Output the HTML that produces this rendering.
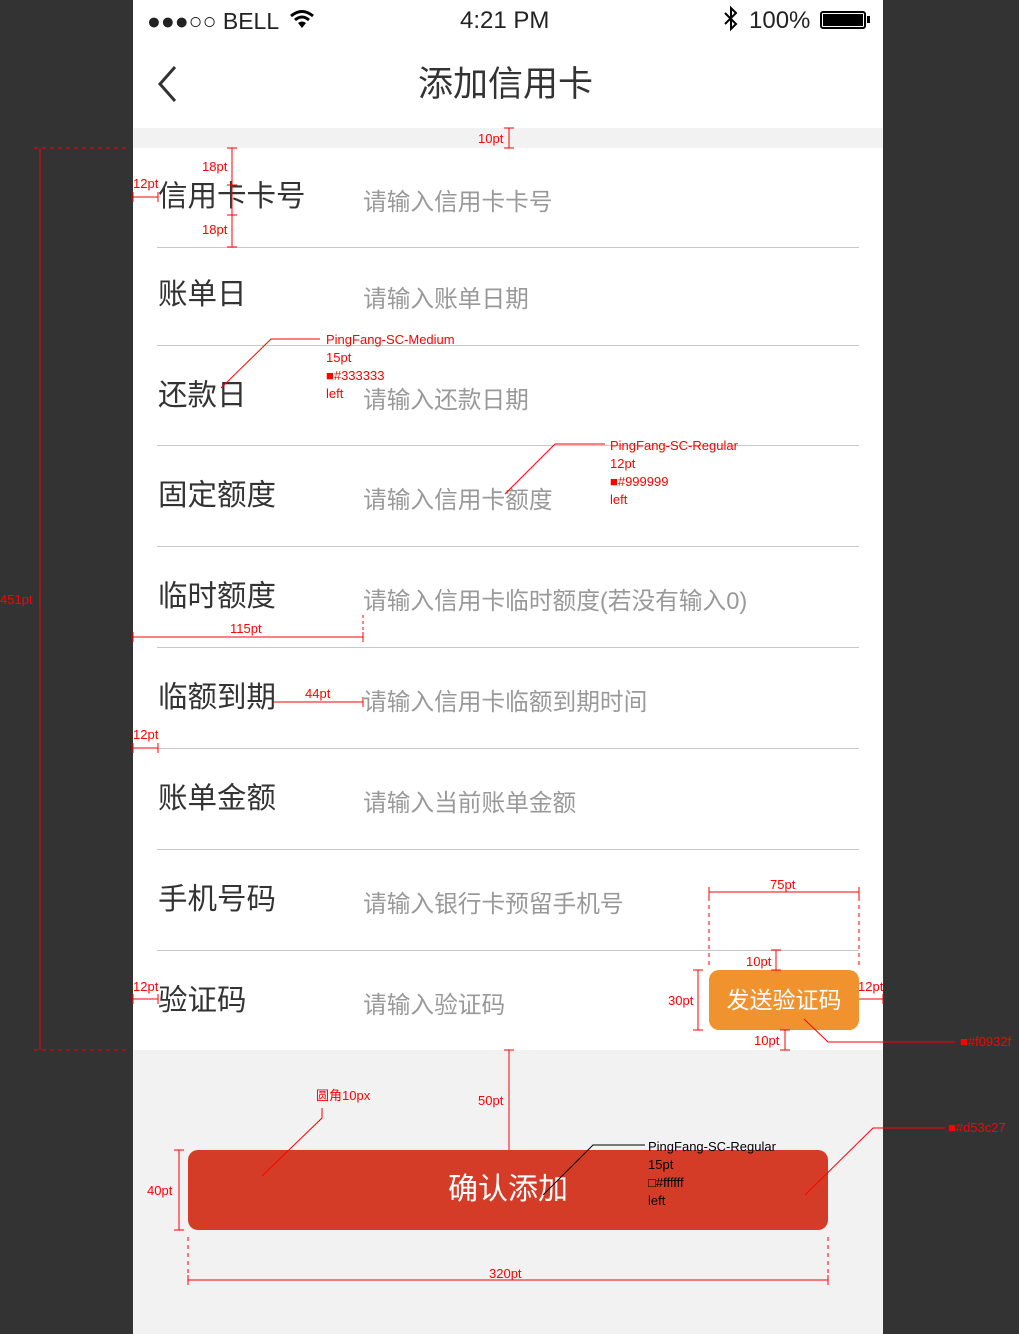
<!DOCTYPE html>
<html><head><meta charset="utf-8"><style>
*{margin:0;padding:0;box-sizing:border-box}
body{width:1019px;height:1334px;background:#333;position:relative;overflow:hidden;font-family:"Liberation Sans","Noto Sans CJK SC",sans-serif}
.a{position:absolute;white-space:nowrap}
.lab{position:absolute;left:158px;font-size:29.5px;color:#333;line-height:36px}
.ph{position:absolute;left:363px;font-size:23.7px;color:#999;line-height:30px}
.sep{position:absolute;left:157px;width:702px;height:1px;background:#c8c8c8}
.r{color:#f00;font-size:13px;position:absolute;white-space:nowrap;line-height:16px}
.k{color:#000;font-size:13px;position:absolute;white-space:nowrap;line-height:16px}
</style></head><body>
<div class="a" style="left:133px;top:0;width:750px;height:1334px;background:#fff"></div>
<div class="a" style="left:133px;top:128px;width:750px;height:20px;background:#f2f2f2"></div>
<div class="a" style="left:133px;top:1050px;width:750px;height:284px;background:#f2f2f2"></div>
<!-- status bar -->
<div class="a" style="left:147px;top:6px;font-size:23px;color:#222;line-height:30px">●●●○○ BELL</div>
<svg class="a" style="left:289px;top:9px" width="26" height="20" viewBox="0 0 26 20"><path d="M2 7 Q13 -2 24 7" stroke="#000" stroke-width="3" fill="none"/><path d="M6 11 Q13 5 20 11" stroke="#000" stroke-width="3" fill="none"/><path d="M13 19 L9 14 Q13 11 17 14Z" fill="#000"/></svg>
<div class="a" style="left:460px;top:6px;font-size:24px;color:#222;line-height:30px">4:21 PM</div>
<svg class="a" style="left:722px;top:5px" width="18" height="28" viewBox="0 0 18 28"><path d="M3 8 L14 19 L9 24 V3 L14 8 L3 19" stroke="#000" stroke-width="2" fill="none"/></svg>
<div class="a" style="left:749px;top:6px;font-size:24px;color:#222;line-height:30px">100%</div>
<div class="a" style="left:820px;top:11px;width:46px;height:18px;border:2px solid #000;border-radius:3px;padding:1px"><div style="background:#000;width:100%;height:100%"></div></div>
<div class="a" style="left:867px;top:16px;width:3px;height:7px;background:#000"></div>
<!-- nav -->
<svg class="a" style="left:155px;top:64px" width="24" height="40"><path d="M20 3 L5 20 L20 37" stroke="#333" stroke-width="3" fill="none"/></svg>
<div class="a" style="left:418px;top:64px;font-size:35px;color:#333;line-height:42px">添加信用卡</div>
<!-- rows -->
<div class="lab" style="top:179px">信用卡卡号</div><div class="ph" style="top:188px">请输入信用卡卡号</div>
<div class="sep" style="top:247px"></div>
<div class="lab" style="top:277px">账单日</div><div class="ph" style="top:285px">请输入账单日期</div>
<div class="sep" style="top:345px"></div>
<div class="lab" style="top:378px">还款日</div><div class="ph" style="top:386px">请输入还款日期</div>
<div class="sep" style="top:445px"></div>
<div class="lab" style="top:478px">固定额度</div><div class="ph" style="top:486px">请输入信用卡额度</div>
<div class="sep" style="top:546px"></div>
<div class="lab" style="top:579px">临时额度</div><div class="ph" style="top:587px">请输入信用卡临时额度(若没有输入0)</div>
<div class="sep" style="top:647px"></div>
<div class="lab" style="top:680px">临额到期</div><div class="ph" style="top:688px">请输入信用卡临额到期时间</div>
<div class="sep" style="top:748px"></div>
<div class="lab" style="top:781px">账单金额</div><div class="ph" style="top:789px">请输入当前账单金额</div>
<div class="sep" style="top:849px"></div>
<div class="lab" style="top:882px">手机号码</div><div class="ph" style="top:890px">请输入银行卡预留手机号</div>
<div class="sep" style="top:950px"></div>
<div class="lab" style="top:983px">验证码</div><div class="ph" style="top:991px">请输入验证码</div>
<div class="a" style="left:709px;top:970px;width:150px;height:60px;background:#f0932f;border-radius:10px;color:#fff;font-size:23px;line-height:60px;text-align:center">发送验证码</div>
<div class="a" style="left:188px;top:1150px;width:640px;height:80px;background:#d53c27;border-radius:10px;color:#fff;font-size:30px;line-height:80px;text-align:center">确认添加</div>
<!-- annotation lines -->
<svg class="a" style="left:0;top:0" width="1019" height="1334">
<g stroke="#f00" stroke-width="1" fill="none">
<path d="M509 128V148M504 128h10M504 148h10"/>
<path d="M232 148V247M227 148h10M227 185h10M227 215h10M227 247h10"/>
<path d="M133 197H158M133 192v10M158 192v10"/>
<path d="M40 148V1050"/>
<path d="M34 148H130M34 1050H130" stroke-dasharray="4 4"/>
<path d="M221 388L271 339H320"/>
<path d="M505 494L555 444H605"/>
<path d="M133 637H363M133 632v10M363 632v10"/>
<path d="M363 615V640" stroke-dasharray="3 3"/>
<path d="M274 702H363M363 697v10"/>
<path d="M133 748H158M133 743v10M158 743v10"/>
<path d="M133 999H158M133 994v10M158 994v10"/>
<path d="M709 892H859M709 887v10M859 887v10"/>
<path d="M709 897V965M859 897V965" stroke-dasharray="4 4"/>
<path d="M776 950V970M771 950h10M771 970h10"/>
<path d="M698 970V1030M693 970h10M693 1030h10"/>
<path d="M785 1030V1050M780 1030h10M780 1050h10"/>
<path d="M859 999H883M883 994v10"/>
<path d="M804 1019L828 1042H955"/>
<path d="M509 1050V1150M504 1050h10"/>
<path d="M322 1108V1118L262 1176"/>
<path d="M179 1150V1230M174 1150h10M174 1230h10"/>
<path d="M188 1280H828M188 1275v10M828 1275v10"/>
<path d="M188 1237V1278M828 1237V1278" stroke-dasharray="4 4"/>
<path d="M805 1195L873 1128H945"/>
</g>
<path d="M543 1195L593 1145H645" stroke="#000" fill="none"/>
</svg>
<div class="r" style="left:478px;top:131px">10pt</div>
<div class="r" style="left:202px;top:159px">18pt</div>
<div class="r" style="left:202px;top:222px">18pt</div>
<div class="r" style="left:133px;top:176px">12pt</div>
<div class="r" style="left:0;top:592px">451pt</div>
<div class="r" style="left:326px;top:332px">PingFang-SC-Medium</div>
<div class="r" style="left:326px;top:350px">15pt</div>
<div class="r" style="left:326px;top:368px">■#333333</div>
<div class="r" style="left:326px;top:386px">left</div>
<div class="r" style="left:610px;top:438px">PingFang-SC-Regular</div>
<div class="r" style="left:610px;top:456px">12pt</div>
<div class="r" style="left:610px;top:474px">■#999999</div>
<div class="r" style="left:610px;top:492px">left</div>
<div class="r" style="left:230px;top:621px">115pt</div>
<div class="r" style="left:305px;top:686px">44pt</div>
<div class="r" style="left:133px;top:727px">12pt</div>
<div class="r" style="left:133px;top:979px">12pt</div>
<div class="r" style="left:770px;top:877px">75pt</div>
<div class="r" style="left:746px;top:954px">10pt</div>
<div class="r" style="left:668px;top:993px">30pt</div>
<div class="r" style="left:858px;top:979px">12pt</div>
<div class="r" style="left:754px;top:1033px">10pt</div>
<div class="r" style="left:960px;top:1034px">■#f0932f</div>
<div class="r" style="left:948px;top:1120px">■#d53c27</div>
<div class="r" style="left:316px;top:1088px">圆角10px</div>
<div class="r" style="left:478px;top:1093px">50pt</div>
<div class="r" style="left:147px;top:1183px">40pt</div>
<div class="r" style="left:489px;top:1266px">320pt</div>
<div class="k" style="left:648px;top:1139px">PingFang-SC-Regular</div>
<div class="k" style="left:648px;top:1157px">15pt</div>
<div class="k" style="left:648px;top:1175px">□#ffffff</div>
<div class="k" style="left:648px;top:1193px">left</div>
</body></html>
